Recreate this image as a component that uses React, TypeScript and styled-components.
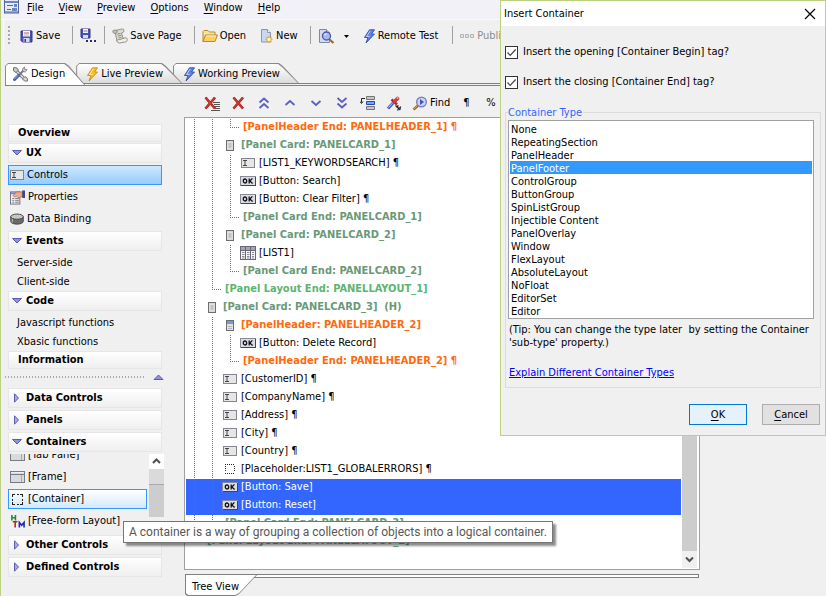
import React, { useState } from "react";
import styled, { createGlobalStyle, css } from "styled-components";

const GlobalStyle = createGlobalStyle`
  *, *::before, *::after { box-sizing: border-box; }
  body {
    margin: 0;
    background: #f0f0f0;
    color: #000;
    font: 11px/14px Tahoma, "DejaVu Sans Condensed", "DejaVu Sans", sans-serif;
  }
  button, select, input { font: inherit; color: inherit; margin: 0; }
  ul { list-style: none; margin: 0; padding: 0; }
`;

/* ---------- window frame ---------- */

const Window = styled.div`
  position: relative;
  display: flex;
  flex-direction: column;
  min-height: 100vh;
  border-left: 1px solid #bcd17f;
  background: #f0f0f0;
  overflow: hidden;
  white-space: nowrap;
`;

const MenuBar = styled.nav`
  display: flex;
  align-items: flex-start;
  height: 20px;
  padding-left: 3px;
  background: #f2f1f7;
  border-bottom: 1px solid #fafafa;
`;

const MenuItem = styled.button`
  border: 0;
  padding: 1px 0 0;
  margin-left: 15px;
  background: none;
  line-height: 14px;
  &:first-of-type { margin-left: 8px; }
`;

const Key = styled.span`
  text-decoration: underline;
  text-underline-offset: 2px;
  text-decoration-skip-ink: none;
`;

const ToolBar = styled.div`
  display: flex;
  align-items: center;
  height: 30px;
  margin-left: 2px;
  padding-left: 4px;
  border-left: 1px solid #fafafa;
`;

const Grip = styled.div`
  width: 2px;
  height: 18px;
  margin-right: 6px;
  background: repeating-linear-gradient(#a8a8a8 0 2px, transparent 2px 4px);
`;

const ToolButton = styled.button<{ $disabledLook?: boolean; $gap?: number; $after?: number }>`
  display: flex;
  align-items: center;
  gap: ${(p) => p.$gap ?? 2}px;
  height: 22px;
  padding: 2px 0 0;
  margin-left: 4px;
  margin-right: ${(p) => p.$after ?? 8}px;
  border: 0;
  background: none;
  color: ${(p) => (p.$disabledLook ? "#8d8d8d" : "#000")};
`;

const Separator = styled.div`
  width: 1px;
  height: 18px;
  margin: 0 3px 0 4px;
  background: #a0a0a0;
`;

/* ---------- document tabs ---------- */

const TabStrip = styled.div`
  display: flex;
  height: 23px;
  margin: 13px 0 0 4px;
  border-bottom: 3px double #808080;
`;

const DocTab = styled.button<{ $active?: boolean; $order: number }>`
  position: relative;
  z-index: ${(p) => p.$order};
  display: flex;
  align-items: center;
  gap: ${(p) => (p.$active ? 3 : 2)}px;
  height: ${(p) => (p.$active ? 22 : 20)}px;
  margin: 0 -9px 0 0;
  padding: ${(p) => (p.$active ? "0 20px 0 7px" : "2px 19px 0 10px")};
  border: 0;
  background: #8a8a8a;
  clip-path: polygon(0 3px, 3px 0, calc(100% - 20px) 0, calc(100% - 16px) 3px, 100% 100%, 0 100%);
  &::before {
    content: "";
    position: absolute;
    inset: 1px 1px 0 1px;
    z-index: -1;
    background: ${(p) => (p.$active ? "#fff" : "linear-gradient(#fff, #dcdcdc)")};
    clip-path: polygon(0 2px, 2px 0, calc(100% - 20px) 0, calc(100% - 16px) 3px, 100% 100%, 0 100%);
  }
`;

/* ---------- sidebar ---------- */

const Body = styled.div`
  display: flex;
  flex: 1;
`;

const Sidebar = styled.aside`
  flex: none;
  width: 183px;
  padding: 38px 22px 0 7px;
`;

const Section = styled.button<{ $plain?: boolean; $space?: number }>`
  display: flex;
  align-items: center;
  gap: 3px;
  width: 100%;
  height: ${(p) => (p.$plain ? 18 : 20)}px;
  margin-top: ${(p) => p.$space ?? 2}px;
  padding: 0 0 0 ${(p) => (p.$plain ? 9 : 2)}px;
  border: 1px solid #e6e6e6;
  background: linear-gradient(#fff, #efefef);
  font-weight: bold;
`;

const SideItem = styled.button<{ $selected?: boolean; $hover?: boolean }>`
  display: flex;
  flex: none;
  align-items: center;
  gap: 3px;
  width: 100%;
  height: 20px;
  margin-top: 2px;
  padding: 0 0 0 1px;
  border: 1px solid transparent;
  background: none;
  ${(p) => p.$selected && css`
    border-color: #3399ff;
    background: linear-gradient(#cde8ff, #98ccfb);
  `}
  ${(p) => p.$hover && css`
    border-color: #3399ff;
    background: linear-gradient(#fff, #d3e9fd);
  `}
`;

const SubItem = styled.button`
  display: block;
  width: 100%;
  height: 19px;
  padding: 0 0 0 9px;
  border: 0;
  background: none;
  text-align: left;
`;

const SubGroup = styled.div`
  padding-top: 2px;
`;

const Splitter = styled.div`
  display: flex;
  align-items: center;
  justify-content: space-between;
  height: 19px;
  margin: 0 -2px 0 -3px;
  padding-bottom: 4px;
  &::before {
    content: "";
    width: 140px;
    height: 2px;
    background: repeating-linear-gradient(90deg, #a8a8a8 0 1px, #f0f0f0 1px 3px);
  }
`;

const ScrollArea = styled.div`
  display: flex;
  gap: 2px;
  height: 79px;
  margin: 0 -2px 4px 0;
  padding-top: 2px;
`;

const ListClip = styled.div`
  display: flex;
  flex: 1;
  flex-direction: column;
  justify-content: flex-end;
  overflow: hidden;
`;

const MiniScroll = styled.div`
  width: 15px;
  height: 63px;
  background: linear-gradient(#fff 0 15px, #dadada 15px 30px, #aaa 30px 31px, #cdcdcd 31px);
`;

/* ---------- tree panel ---------- */

const Main = styled.main`
  display: flex;
  flex: 1;
  flex-direction: column;
  min-width: 0;
  margin-right: 126px;
`;

const TreeTools = styled.div`
  display: flex;
  align-items: center;
  gap: 10px;
  height: 31px;
  padding: 3px 0 0 20px;
`;

const IconButton = styled.button`
  display: flex;
  flex: none;
  align-items: center;
  gap: 2px;
  min-width: 16px;
  height: 16px;
  padding: 0;
  border: 0;
  background: none;
`;

const TreeBox = styled.div`
  display: flex;
  flex: 1;
  border: 1px solid #a0a0a0;
  background: #fff;
  padding: 1px 2px 1px 1px;
`;

const Tree = styled.ul`
  flex: 1;
  margin-right: 1px;
`;

const TreeRow = styled.li<{ $selected?: boolean; $color: string }>`
  display: flex;
  height: 18px;
  line-height: 16px;
  color: ${(p) => (p.$selected ? "#fff" : p.$color)};
  background: ${(p) => (p.$selected ? "#3366ff" : "transparent")};
`;

const Guide = styled.span<{ $kind: string }>`
  flex: none;
  width: 18px;
  height: 18px;
  ${(p) => p.$kind === "|" && css`
    background: repeating-linear-gradient(#707070 0 1px, transparent 1px 2px) 8px 0 / 1px 18px no-repeat;
  `}
  ${(p) => p.$kind === "L" && css`
    background:
      repeating-linear-gradient(#707070 0 1px, transparent 1px 2px) 8px 0 / 1px 9px no-repeat,
      repeating-linear-gradient(90deg, #707070 0 1px, transparent 1px 2px) 8px 8px / 10px 1px no-repeat;
  `}
`;

const TreeIcon = styled.span`
  display: flex;
  flex: none;
  align-items: center;
  justify-content: center;
  width: 16px;
  height: 16px;
  margin-right: 3px;
`;

const TreeLabel = styled.span<{ $bold?: boolean; $end?: boolean }>`
  padding-left: ${(p) => (p.$end ? 3 : 0)}px;
  font-weight: ${(p) => (p.$bold ? "bold" : "normal")};
  white-space: pre;
`;

const TreeScroll = styled.div`
  display: flex;
  flex-direction: column;
  align-items: center;
  width: 15px;
  background: #f0f0f0;
  &::before {
    content: "";
    flex: 1;
    width: 15px;
    background: #cdcdcd;
  }
`;

const ScrollArrow = styled.button`
  display: flex;
  align-items: center;
  justify-content: center;
  width: 15px;
  height: 17px;
  border: 0;
  padding: 0;
  background: none;
`;

const ViewTabs = styled.div`
  height: 26px;
  padding: 4px 1px 0 1px;
`;

const ViewRail = styled.div`
  height: 4px;
  border: 1px solid #808080;
  border-left: 0;
  background: #fff;
`;

const ViewTab = styled.button`
  position: relative;
  z-index: 0;
  display: block;
  height: 22px;
  margin-top: -4px;
  padding: 3px 18px 0 7px;
  border: 0;
  background: #808080;
  clip-path: polygon(0 0, 100% 0, 100% 1px, calc(100% - 18px) 20px, calc(100% - 22px) 100%, 2px 100%, 0 20px);
  &::before {
    content: "";
    position: absolute;
    inset: 1px 1px 1px 1px;
    z-index: -1;
    background: #fff;
    clip-path: polygon(0 0, 100% 0, calc(100% - 17px) 18px, calc(100% - 21px) 100%, 2px 100%, 0 18px);
  }
`;

/* ---------- overlays ---------- */

const Tooltip = styled.div`
  position: absolute;
  left: 122px;
  top: 521px;
  z-index: 20;
  padding: 2px 5px 1px 5px;
  border: 1px solid #767676;
  background: #fff;
  box-shadow: 3px 3px 2px rgba(0, 0, 0, 0.45);
  color: #575757;
  font: 12px/17px "Segoe UI", Roboto, sans-serif;
`;

const Dialog = styled.section`
  position: absolute;
  top: 0;
  right: 0;
  z-index: 10;
  width: 326px;
  border: 1px solid #bcd17f;
  background: #f0f0f0;
`;

const DialogTitle = styled.header`
  display: flex;
  align-items: center;
  justify-content: space-between;
  height: 25px;
  padding: 0 9px 0 3px;
  background: #fff;
  font-size: 11px;
`;

const TitleText = styled.h1`
  margin: 0;
  font: inherit;
`;

const CloseButton = styled.button`
  display: flex;
  padding: 0;
  border: 0;
  background: none;
`;

const CheckList = styled.div`
  display: flex;
  flex-direction: column;
  gap: 16px;
  padding: 19px 4px 0;
`;

const CheckLabel = styled.label`
  display: flex;
  align-items: center;
  gap: 5px;
  height: 14px;
`;

const CheckBox = styled.input`
  appearance: none;
  flex: none;
  width: 13px;
  height: 13px;
  border: 1px solid #333;
  background: #fff;
  &:checked {
    background: #fff url("data:image/svg+xml,%3Csvg xmlns='http://www.w3.org/2000/svg' viewBox='0 0 11 11'%3E%3Cpath d='M1.5 5.5l2.700 2.8L9.6 2.5' fill='none' stroke='%23444' stroke-width='1.2'/%3E%3C/svg%3E") center / 11px 11px;
  }
`;

const Group = styled.fieldset`
  min-width: 0;
  margin: 16px 4px 0;
  padding: 0 6px 7px 2px;
  border: 1px solid #dcdcdc;
`;

const Legend = styled.legend`
  margin: 0;
  padding: 1px 1px 0 0;
  color: #3366ff;
`;

const ListBox = styled.select`
  appearance: none;
  display: block;
  width: 100%;
  height: 199px;
  padding: 1px;
  border: 1px solid #a0a0a0;
  border-radius: 0;
  outline: 0;
  background: #fff;
  overflow: hidden;
  option {
    height: 13px;
    min-height: 13px;
    padding: 1px 1px 0;
    line-height: 13px;
    color: #000;
  }
  option:checked {
    background: #3399ff linear-gradient(#3399ff, #3399ff);
    color: #fff;
    outline: 1px dotted #c8702a;
    outline-offset: -1px;
  }
`;

const Tip = styled.p`
  margin: 4px 0 0 1px;
  line-height: 13px;
  white-space: pre;
`;

const HelpLink = styled.a`
  display: inline-block;
  margin: 17px 0 0 1px;
  color: #0000ff;
`;

const DialogButtons = styled.footer`
  display: flex;
  justify-content: flex-end;
  gap: 15px;
  padding: 16px 5px 10px;
`;

const PushButton = styled.button<{ $primary?: boolean }>`
  width: 58px;
  height: 21px;
  padding: 0;
  border: 1px solid ${(p) => (p.$primary ? "#0078d7" : "#adadad")};
  background: ${(p) => (p.$primary ? "#e5f1fb" : "#e1e1e1")};
`;

/* ---------- icons ---------- */

const AppIcon = () => (
  <svg width="15" height="14" viewBox="0 0 15 14">
    <rect x=".5" y="-2" width="14" height="15" fill="#e6eaf6" stroke="#51689b" />
    <path d="M1 1h13v2H1z" fill="#6b86c4" />
    <path d="M3 5.500h6M3 9.500h4" stroke="#51689b" />
    <path d="M10 4h3v3h-3zM8 8h5v3H8z" fill="#6b86c4" />
    <path d="M1 12h13" stroke="#51689b" />
  </svg>
);

const SaveIcon = () => (
  <svg width="13" height="13" viewBox="0 0 13 13">
    <path d="M1 1h11v11H2.500L1 10.500z" fill="#4a52b5" stroke="#2f3688" />
    <rect x="3" y="1" width="7" height="5.500" fill="#f5f5fa" />
    <path d="M4 3h5" stroke="#c9605a" />
    <path d="M4 5h5" stroke="#bbb" />
    <rect x="3.500" y="8" width="6" height="4" fill="#d7dbe8" />
    <rect x="4.500" y="9" width="1.500" height="3" fill="#2f3688" />
  </svg>
);

const SaveAsIcon = () => (
  <svg width="16" height="16" viewBox="0 0 16 16">
    <path d="M1 1h9v9H2L1 9z" fill="#4a52b5" stroke="#2f3688" />
    <rect x="3" y="1" width="5" height="4" fill="#f5f5fa" />
    <path d="M3.500 3h4" stroke="#c9605a" />
    <rect x="3" y="7" width="5" height="3" fill="#d7dbe8" />
    <path d="M6 12h2v2H6zM10 12h2v2h-2zM14 12h2v2h-2z" fill="#222c70" />
  </svg>
);

const ScrollPageIcon = () => (
  <svg width="16" height="16" viewBox="0 0 17 16" stroke="#777468" strokeWidth=".8">
    <path d="M4 2l7-1.500c2 0 2 2.500 1 3.500l-2 1 2.500 7-7 2L3.500 5z" fill="#dedbd2" />
    <path d="M4 2C2 1 0 2.500 1 4s3 2 4 .5S5.500 2 4 2z" fill="#c2bfb5" />
    <path d="M5.500 14c-.5-2 1-2.500 2-2l6-2c2-.5 3.500 1 2.500 3s-2 1.500-3 1.500l-5 1c-1 0-2-.5-2.500-1.500z" fill="#efede7" />
    <path d="M5.500 6l3.500-.8M6.200 8l3.500-.8M7 10l3-.8" fill="none" />
  </svg>
);

const FolderIcon = () => (
  <svg width="16" height="14" viewBox="0 0 16 14">
    <path d="M1 12.500V2.500L2 1.500h4l1.500 1.500H13v3" fill="#fbe29a" stroke="#b98a2a" />
    <path d="M1 12.500L3.500 6H15.500L13 12.500z" fill="#fbd061" stroke="#b98a2a" />
    <path d="M4.500 7h9.500" stroke="#fff3c8" />
  </svg>
);

const NewIcon = () => (
  <svg width="14" height="15" viewBox="0 0 14 15">
    <path d="M1.500.5h6L10.500 3.500v9.500h-9z" fill="#c9d8ee" stroke="#8996ad" />
    <path d="M7.500.5v3h3" fill="#fff" stroke="#8996ad" />
    <path d="M9 7v7M5.500 10.500h7M6.500 8l5 5M11.500 8l-5 5" stroke="#efa62c" strokeWidth="1.300" />
    <circle cx="9" cy="10.500" r="1.700" fill="#fff4b5" />
  </svg>
);

const PagePreviewIcon = () => (
  <svg width="17" height="15" viewBox="0 0 17 15">
    <path d="M1.500.5h7l3 3v10h-10z" fill="#d4dcec" stroke="#7d8aa5" />
    <path d="M8.500.5v3h3" fill="#fff" stroke="#7d8aa5" />
    <path d="M11 10l4.500 4" stroke="#a06a2c" strokeWidth="2.200" />
    <circle cx="8.500" cy="7" r="4" fill="#a9b7f3" stroke="#4c57a8" strokeWidth="1.300" />
    <path d="M6.500 6.500c.3-1.200 1-1.700 2-1.700" stroke="#fff" fill="none" />
  </svg>
);

const Caret = () => (
  <svg width="5" height="3" viewBox="0 0 5 3"><path d="M0 0h5L2.500 3z" fill="#000" /></svg>
);

const Bolt = ({ fill, stroke }: { fill: string; stroke: string }) => (
  <svg width="13" height="15" viewBox="0 0 13 15">
    <path d="M6.500.8h5L8.500 5h3L3 14l2-5.500H1.500z" fill={fill} stroke={stroke} strokeWidth=".9" />
    <path d="M7.300 1.800L3.500 7.500h3" fill="none" stroke="#fff" strokeOpacity=".6" />
  </svg>
);
const BlueBolt = () => <Bolt fill="#5f83ea" stroke="#3449a8" />;
const YellowBolt = () => <Bolt fill="#fcc21c" stroke="#d38a12" />;

const PublishIcon = () => (
  <svg width="15" height="6" viewBox="0 0 15 6">
    <path d="M.5 1.500h3v3h-3zM5.500 1.500h3v3h-3zM10.500 1.500h3v3h-3z" fill="#e2e2e2" stroke="#b5b5b5" />
  </svg>
);

const ToolsIcon = () => (
  <svg width="16" height="16" viewBox="0 0 16 16" fill="none">
    <path d="M4 4.500l8.500 8.500" stroke="#777" strokeWidth="3.200" />
    <path d="M4 4.500l8.500 8.500" stroke="#dedede" strokeWidth="1.600" />
    <path d="M1.500 1.500l3.500.5 1.500 2-2.500 2.500L1.500 5z" fill="#c9c9c9" stroke="#777" />
    <path d="M10.500 13l2.500-2.500 2.500 2v2.500h-3z" fill="#d5d5d5" stroke="#777" />
    <path d="M8 8l4-4" stroke="#777" strokeWidth="2" />
    <path d="M15 3.500a3 3 0 01-4 2 3 3 0 011.500-4.500l.2 2.300z" fill="#c9c9c9" stroke="#777" strokeWidth=".8" />
    <path d="M2.500 13.500l4.500-4.500" stroke="#4359b8" strokeWidth="3" strokeLinecap="round" />
    <path d="M2.500 13l3.500-3.500" stroke="#9db0f5" strokeLinecap="round" />
  </svg>
);

const redX = "M1.500 1.500l9.500 11M11 1.500L1.500 12.500";
const DeleteAllIcon = () => (
  <svg width="16" height="15" viewBox="0 0 16 15">
    <path d="M9 6.500h7M10 8.500h6M10 10.500h6M10 12.500h6M7 14.500h9" stroke="#555" />
    <path d={redX} stroke="#8f1612" strokeWidth="2.600" />
    <path d={redX} stroke="#d23a34" strokeWidth="1.400" />
  </svg>
);
const DeleteIcon = () => (
  <svg width="16" height="15" viewBox="-2 0 16 15">
    <path d={redX} stroke="#8f1612" strokeWidth="2.600" />
    <path d={redX} stroke="#d23a34" strokeWidth="1.400" />
  </svg>
);

const Chevron = ({ up, double }: { up?: boolean; double?: boolean }) => (
  <svg width="16" height="14" viewBox="0 0 16 14">
    <g transform={up ? undefined : "matrix(1 0 0 -1 0 14)"} fill="none" stroke="#5a5fc4" strokeWidth="1.800">
      {double ? <path d="M3.500 6.500L8 2.500l4.500 4M3.500 12L8 8l4.500 4" /> : <path d="M3.500 9L8 5l4.500 4" />}
    </g>
  </svg>
);

const InsertRowIcon = () => (
  <svg width="16" height="15" viewBox="0 0 16 15">
    <path d="M6.500.5h8v3h-8zM6.500 10.500h8v3h-8z" fill="#c5c5c5" stroke="#777" />
    <path d="M6.500 5.500h8v3h-8z" fill="#7ea3f5" stroke="#2346b8" />
    <path d="M5 2.500H1.500v4M0 5.500l1.500 2L3 5.500" fill="none" stroke="#222" />
  </svg>
);

const PickerIcon = () => (
  <svg width="16" height="15" viewBox="0 0 16 15">
    <path d="M2 12.500l5.500-6" stroke="#4f5bbd" strokeWidth="3" />
    <path d="M2.500 11.500l4.500-5" stroke="#c3caf8" />
    <path d="M5.500 3.500l5.500 5" stroke="#a82a23" strokeWidth="2.400" />
    <path d="M8.500 5.500L11.500 2.500" stroke="#cf3c33" strokeWidth="3.600" strokeLinecap="round" />
    <circle cx="11.500" cy="2" r=".9" fill="#f7a9a2" />
    <path d="M9.500 9.500l3.500 3.500M12 9l-.5 2.500M15 11.500l-2.500.5M11 14l3-.5.5-3" stroke="#222" strokeWidth="1.200" fill="none" />
  </svg>
);

const FindIcon = () => (
  <svg width="16" height="15" viewBox="0 0 16 15">
    <path d="M1.500 13.500L6 9.500" stroke="#a0611f" strokeWidth="2.600" />
    <path d="M1.500 13L5.500 9.500" stroke="#eab565" />
    <circle cx="9.500" cy="6" r="4.800" fill="#cfd6fa" stroke="#7781c4" strokeWidth="1.400" />
    <path d="M8 3v6l4-3z" fill="#4a4fc0" />
  </svg>
);

const TriDown = () => (
  <svg width="12" height="6" viewBox="0 0 12 6"><path d="M1.500 .5h9L6 5z" fill="#8f8fe6" stroke="#5c5cb4" /></svg>
);
const TriRight = () => (
  <svg width="12" height="10" viewBox="0 0 12 10"><path d="M3.500 .8v8.400L7.500 5z" fill="#a9a9f0" stroke="#5c5cb4" /></svg>
);
const TriUp = () => (
  <svg width="11" height="6" viewBox="0 0 11 6"><path d="M1 5.500h9L5.500 1z" fill="#8f8fe6" stroke="#5c5cb4" /></svg>
);

const FieldIcon = () => (
  <svg width="14" height="10" viewBox="0 0 14 10">
    <rect x=".5" y=".5" width="13" height="9" fill="#e6e6e6" stroke="#85858f" />
    <path d="M2 2.500h4M4 2.500v5M2 7.500h4" fill="none" stroke="#444" />
  </svg>
);

const OkIcon = () => (
  <svg width="16" height="10" viewBox="0 0 16 10">
    <rect x=".5" y=".5" width="15" height="9" fill="#dcdce4" stroke="#8a8a96" />
    <path d="M1 9.500h15M15.500 1v9" stroke="#44444e" />
    <ellipse cx="5" cy="5" rx="1.700" ry="2" fill="none" stroke="#111" strokeWidth="1.300" />
    <path d="M9.200 2.400v5.200M12.400 2.400L9.800 5l2.800 2.600" fill="none" stroke="#111" strokeWidth="1.300" />
  </svg>
);

const CardIcon = () => (
  <svg width="8" height="11" viewBox="0 0 8 11">
    <rect x=".5" y=".5" width="7" height="10" fill="#d8d8d8" stroke="#6e6e6e" />
    <rect x="2" y="2.500" width="4" height="6" fill="#c4c4c4" stroke="#eee" strokeWidth=".6" />
  </svg>
);

const HeaderIcon = () => (
  <svg width="8" height="11" viewBox="0 0 8 11">
    <rect x=".5" y=".5" width="7" height="10" fill="#e2e2e2" stroke="#6e6e6e" />
    <path d="M1 1h6v3H1z" fill="#6f9be0" />
    <path d="M2 6.500h4M2 8.500h4" stroke="#b5b5b5" />
  </svg>
);

const GridIcon = () => (
  <svg width="16" height="14" viewBox="0 0 16 14">
    <rect x=".5" y=".5" width="15" height="13" fill="#f4f4f8" stroke="#686874" />
    <path d="M1 1h14v3H1z" fill="#a3a3b3" />
    <path d="M5.500 1v12M10.500 1v12M1 4.500h14" stroke="#686874" />
    <path d="M2 6.500h12M2 8.500h12M2 10.500h12M2 12h12" stroke="#8c8c99" strokeDasharray="2.500 2.500" />
  </svg>
);

const DashedIcon = () => (
  <svg width="10" height="10" viewBox="0 0 10 10">
    <path d="M0 .5h10M0 9.500h10M.5 2v6M9.500 2v6" stroke="#222" strokeDasharray="1 1" shapeRendering="crispEdges" />
  </svg>
);

const ContainerIcon = () => (
  <svg width="15" height="11" viewBox="-2 0 15 11">
    <path
      d="M0 .5h3M5 .5h2M8 .5h3M0 10.500h3M5 10.500h2M8 10.500h3M.5 0v3M.5 5v2M.5 8v3M10.500 0v3M10.500 5v2M10.500 8v3"
      stroke="#222"
      shapeRendering="crispEdges"
    />
  </svg>
);

const FrameIcon = () => (
  <svg width="15" height="12" viewBox="0 0 15 12">
    <rect x=".5" y=".5" width="14" height="11" fill="#d9dadd" stroke="#777b83" />
    <path d="M1 1.500h13" stroke="#eef" />
    <path d="M1 3.500h13" stroke="#777b83" />
    <path d="M11.500 4v7" stroke="#aaa" />
  </svg>
);

const HtmIcon = () => (
  <svg width="15" height="15" viewBox="0 0 16 16" fill="none" strokeWidth="1.700">
    <path d="M2 1v6M5.800 1v6M2 4h4" stroke="#228b3a" />
    <path d="M3 8.300h5M5.500 8.500v6" stroke="#c02222" />
    <path d="M10 14.500V9l2.500 3L15 9v5.500" stroke="#1b2aa8" />
  </svg>
);

const PropertiesIcon = () => (
  <svg width="15" height="15" viewBox="0 0 16 15">
    <rect x=".5" y="1.500" width="10" height="13" fill="#eef0f6" stroke="#6d6d80" />
    <path d="M1 2h9v2H1z" fill="#6b86e0" />
    <path d="M2.500 8.500h2M5.500 8.500h4M2.500 10.500h2M5.500 10.500h4M2.500 12.500h2M5.500 12.500h4" stroke="#777" />
    <path d="M3 5.500L7 1.500h6v5L9 8 7 6 5 7z" fill="#eeab86" stroke="#a8623f" strokeWidth=".7" />
    <rect x="13" y="0" width="3" height="8" fill="#3d478f" />
  </svg>
);

const DatabaseIcon = () => (
  <svg width="14" height="12" viewBox="0 0 15 12">
    <path d="M.8 3.500v5c0 4 13.400 4 13.400 0v-5z" fill="#6a6a6a" stroke="#444" />
    <path d="M2.500 5.500v4" stroke="#aaa" strokeWidth="1.500" />
    <ellipse cx="7.500" cy="3.500" rx="6.700" ry="2.800" fill="#c6c6c6" stroke="#444" />
  </svg>
);

const ArrowUp = () => (
  <svg width="15" height="15" viewBox="0 0 15 15"><path d="M4 9l3.500-3.500L11 9" fill="none" stroke="#505050" strokeWidth="2" /></svg>
);
const ArrowDown = () => (
  <svg width="9" height="7" viewBox="0 0 9 7"><path d="M1 1.500L4.500 5 8 1.500" fill="none" stroke="#505050" strokeWidth="2" /></svg>
);
const CloseIcon = () => (
  <svg width="12" height="12" viewBox="0 0 12 12"><path d="M1 1l10 10M11 1L1 11" stroke="#000" strokeWidth="1.200" /></svg>
);

/* ---------- data ---------- */

const ORANGE = "#ff6a0c";
const SAGE = "#6a9978";
const LEAF = "#5cb571";

type Row = {
  guides: string;
  icon?: React.ComponentType;
  text: string;
  color?: string;
};

const rows: Row[] = [
  { guides: "||L", text: "[PanelHeader End: PANELHEADER_1] ¶", color: ORANGE },
  { guides: "||", icon: CardIcon, text: "[Panel Card: PANELCARD_1]", color: SAGE },
  { guides: "|||", icon: FieldIcon, text: "[LIST1_KEYWORDSEARCH] ¶" },
  { guides: "|||", icon: OkIcon, text: "[Button: Search]" },
  { guides: "|||", icon: OkIcon, text: "[Button: Clear Filter] ¶" },
  { guides: "||L", text: "[Panel Card End: PANELCARD_1]", color: SAGE },
  { guides: "||", icon: CardIcon, text: "[Panel Card: PANELCARD_2]", color: SAGE },
  { guides: "|||", icon: GridIcon, text: "[LIST1]" },
  { guides: "||L", text: "[Panel Card End: PANELCARD_2]", color: SAGE },
  { guides: "|L", text: "[Panel Layout End: PANELLAYOUT_1]", color: LEAF },
  { guides: "|", icon: CardIcon, text: "[Panel Card: PANELCARD_3]  (H)", color: SAGE },
  { guides: "||", icon: HeaderIcon, text: "[PanelHeader: PANELHEADER_2]", color: ORANGE },
  { guides: "|||", icon: OkIcon, text: "[Button: Delete Record]" },
  { guides: "||L", text: "[PanelHeader End: PANELHEADER_2] ¶", color: ORANGE },
  { guides: "||", icon: FieldIcon, text: "[CustomerID] ¶" },
  { guides: "||", icon: FieldIcon, text: "[CompanyName] ¶" },
  { guides: "||", icon: FieldIcon, text: "[Address] ¶" },
  { guides: "||", icon: FieldIcon, text: "[City] ¶" },
  { guides: "||", icon: FieldIcon, text: "[Country] ¶" },
  { guides: "||", icon: DashedIcon, text: "[Placeholder:LIST1_GLOBALERRORS] ¶" },
  { guides: "||", icon: OkIcon, text: "[Button: Save]" },
  { guides: "||", icon: OkIcon, text: "[Button: Reset]" },
  { guides: "|L", text: "[Panel Card End: PANELCARD_3]", color: SAGE },
  { guides: "L", text: "[Panel Layout End: PANELLAYOUT_2]", color: LEAF },
];
const selectedRows = ["[Button: Save]", "[Button: Reset]"];

const containerTypes = [
  "None", "RepeatingSection", "PanelHeader", "PanelFooter", "ControlGroup", "ButtonGroup",
  "SpinListGroup", "Injectible Content", "PanelOverlay", "Window", "FlexLayout",
  "AbsoluteLayout", "NoFloat", "EditorSet", "Editor",
];

const menus = ["File", "View", "Preview", "Options", "Window", "Help"];

/* ---------- parts ---------- */

const Accel = ({ text }: { text: string }) => (
  <><Key>{text[0]}</Key>{text.slice(1)}</>
);

function SidePanel() {
  return (
    <Sidebar>
      <Section $plain $space={0}>Overview</Section>
      <Section $space={1}><TriDown />UX</Section>
      <SideItem $selected><FieldIcon />Controls</SideItem>
      <SideItem><PropertiesIcon />Properties</SideItem>
      <SideItem><DatabaseIcon />Data Binding</SideItem>
      <Section $space={2}><TriDown />Events</Section>
      <SubGroup>
        <SubItem>Server-side</SubItem>
        <SubItem>Client-side</SubItem>
      </SubGroup>
      <Section $space={0}><TriDown />Code</Section>
      <SubGroup>
        <SubItem>Javascript functions</SubItem>
        <SubItem>Xbasic functions</SubItem>
      </SubGroup>
      <Section $plain $space={0}>Information</Section>
      <Splitter><TriUp /></Splitter>
      <Section $space={0}><TriRight />Data Controls</Section>
      <Section><TriRight />Panels</Section>
      <Section><TriDown />Containers</Section>
      <ScrollArea>
        <ListClip>
          <SideItem><FrameIcon />[Tab Pane]</SideItem>
          <SideItem><FrameIcon />[Frame]</SideItem>
          <SideItem $hover><ContainerIcon />[Container]</SideItem>
          <SideItem><HtmIcon />[Free-form Layout]</SideItem>
        </ListClip>
        <MiniScroll><ArrowUp /></MiniScroll>
      </ScrollArea>
      <Section><TriRight />Other Controls</Section>
      <Section><TriRight />Defined Controls</Section>
    </Sidebar>
  );
}

function TreePanel() {
  return (
    <Main>
      <TreeTools>
        <IconButton aria-label="Delete all"><DeleteAllIcon /></IconButton>
        <IconButton aria-label="Delete"><DeleteIcon /></IconButton>
        <IconButton aria-label="Move to top"><Chevron up double /></IconButton>
        <IconButton aria-label="Move up"><Chevron up /></IconButton>
        <IconButton aria-label="Move down"><Chevron /></IconButton>
        <IconButton aria-label="Move to bottom"><Chevron double /></IconButton>
        <IconButton aria-label="Insert row"><InsertRowIcon /></IconButton>
        <IconButton aria-label="Pick style"><PickerIcon /></IconButton>
        <IconButton><FindIcon />Find</IconButton>
        <IconButton>&nbsp;¶</IconButton>
        <IconButton>%</IconButton>
      </TreeTools>
      <TreeBox>
        <Tree>
          {rows.map(({ guides, icon: Icon, text, color }) => (
            <TreeRow key={text} $selected={selectedRows.includes(text)} $color={color ?? "#000"}>
              {guides.split("").map((kind, i) => <Guide key={i} $kind={kind} />)}
              {Icon && <TreeIcon><Icon /></TreeIcon>}
              <TreeLabel $bold={!!color} $end={!Icon}>{text}</TreeLabel>
            </TreeRow>
          ))}
        </Tree>
        <TreeScroll>
          <ScrollArrow aria-label="Scroll down"><ArrowDown /></ScrollArrow>
        </TreeScroll>
      </TreeBox>
      <ViewTabs>
        <ViewRail />
        <ViewTab>Tree View</ViewTab>
      </ViewTabs>
    </Main>
  );
}

function InsertDialog() {
  const [type, setType] = useState("PanelFooter");
  return (
    <Dialog role="dialog" aria-labelledby="dialog-title">
      <DialogTitle>
        <TitleText id="dialog-title">Insert Container</TitleText>
        <CloseButton aria-label="Close"><CloseIcon /></CloseButton>
      </DialogTitle>
      <CheckList>
        <CheckLabel><CheckBox type="checkbox" defaultChecked />Insert the opening [Container Begin] tag?</CheckLabel>
        <CheckLabel><CheckBox type="checkbox" defaultChecked />Insert the closing [Container End] tag?</CheckLabel>
      </CheckList>
      <Group>
        <Legend>Container Type</Legend>
        <ListBox size={15} aria-label="Container Type" value={type} onChange={(e) => setType(e.target.value)}>
          {containerTypes.map((name) => <option key={name}>{name}</option>)}
        </ListBox>
        <Tip>{"(Tip: You can change the type later  by setting the Container\n'sub-type' property.)"}</Tip>
        <HelpLink href="#types">Explain Different Container Types</HelpLink>
      </Group>
      <DialogButtons>
        <PushButton $primary><Accel text="OK" /></PushButton>
        <PushButton><Accel text="Cancel" /></PushButton>
      </DialogButtons>
    </Dialog>
  );
}

export default function App() {
  return (
    <>
      <GlobalStyle />
      <Window>
        <MenuBar>
          <AppIcon />
          {menus.map((name) => <MenuItem key={name}><Accel text={name} /></MenuItem>)}
        </MenuBar>
        <ToolBar>
          <Grip />
          <ToolButton $gap={3}><SaveIcon />Save</ToolButton>
          <Separator />
          <ToolButton aria-label="Save as" $after={4}><SaveAsIcon /></ToolButton>
          <Separator />
          <ToolButton><ScrollPageIcon />Save Page</ToolButton>
          <Separator />
          <ToolButton $after={10}><FolderIcon />Open</ToolButton>
          <ToolButton><NewIcon />New</ToolButton>
          <Separator />
          <ToolButton aria-label="Preview" $gap={9} $after={10}><PagePreviewIcon /><Caret /></ToolButton>
          <ToolButton $after={10}><BlueBolt />Remote Test</ToolButton>
          <Separator />
          <ToolButton $disabledLook><PublishIcon />Publish</ToolButton>
        </ToolBar>
        <TabStrip>
          <DocTab $active $order={3}><ToolsIcon />Design</DocTab>
          <DocTab $order={2}><YellowBolt />Live Preview</DocTab>
          <DocTab $order={1}><BlueBolt />Working Preview</DocTab>
        </TabStrip>
        <Body>
          <SidePanel />
          <TreePanel />
        </Body>
        <InsertDialog />
        <Tooltip role="tooltip">A container is a way of grouping a collection of objects into a logical container.</Tooltip>
      </Window>
    </>
  );
}
